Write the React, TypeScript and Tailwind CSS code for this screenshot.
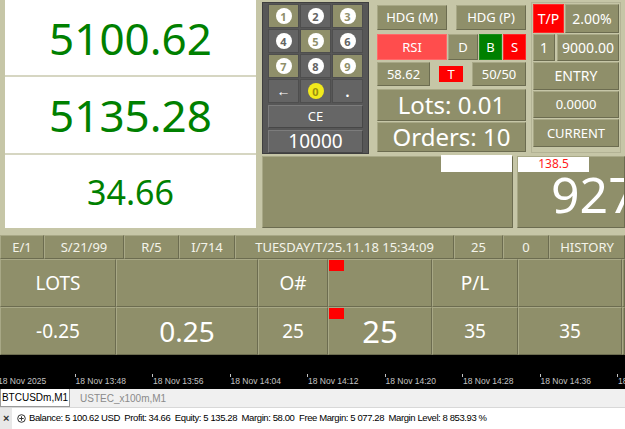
import clsx from 'clsx';
import type { ReactNode } from 'react';

const olive = 'bg-[#8f8f6a] border border-t-[#a8a886] border-l-[#a8a886] border-b-[#6c6c50] border-r-[#6c6c50]';

function Btn({ className, children }: { className?: string; children?: ReactNode }) {
    return (
        <div className={clsx('flex items-center justify-center text-white leading-none whitespace-nowrap', olive, className)}>
            {children}
        </div>
    );
}

function Key({ n, tone }: { n: string; tone: 'olive' | 'gray' }) {
    const bg = tone === 'olive' ? 'bg-[#8f8f6a]' : 'bg-[#646464]';
    const fg = tone === 'olive' ? 'text-[#8f8f6a]' : 'text-[#646464]';
    return (
        <div className={clsx('flex items-center justify-center h-[24px] border border-[#4e4e4e]', bg)}>
            <span className={clsx('w-[16px] h-[16px] rounded-full bg-white flex items-center justify-center text-[11px] font-bold leading-none', fg)}>
                {n}
            </span>
        </div>
    );
}

export default function App() {
    const keys: [string, 'olive' | 'gray'][] = [
        ['1', 'olive'], ['2', 'gray'], ['3', 'olive'],
        ['4', 'gray'], ['5', 'olive'], ['6', 'gray'],
        ['7', 'olive'], ['8', 'gray'], ['9', 'olive'],
    ];

    const info = [
        { t: 'E/1', w: 'w-[44px]' },
        { t: 'S/21/99', w: 'w-[80px]' },
        { t: 'R/5', w: 'w-[55px]' },
        { t: 'I/714', w: 'w-[56px]' },
        { t: 'TUESDAY/T/25.11.18 15:34:09', w: 'w-[219px]' },
        { t: '25', w: 'w-[49px]' },
        { t: '0', w: 'w-[46px]' },
        { t: 'HISTORY', w: 'flex-1' },
    ];

    const widths = ['w-[116px]', 'w-[142px]', 'w-[70px]', 'w-[104px]', 'w-[86px]', 'w-[104px]', 'flex-1'];
    const row1: (string | null)[] = ['LOTS', null, 'O#', null, 'P/L', null, null];
    const row2: { t: string; big?: boolean }[] = [
        { t: '-0.25' }, { t: '0.25', big: true }, { t: '25' }, { t: '25', big: true }, { t: '35' }, { t: '35' }, { t: '' },
    ];

    const ticks = ['18 Nov 2025', '18 Nov 13:48', '18 Nov 13:56', '18 Nov 14:04', '18 Nov 14:12', '18 Nov 14:20', '18 Nov 14:28', '18 Nov 14:36', '18 Nov 14:44'];

    return (
        <div className="w-[625px] h-[429px] overflow-hidden bg-[#c6c6a7] font-['Noto_Sans',sans-serif]">
            {/* top */}
            <div className="flex h-[235px]">
                <div className="ml-[5px] w-[251px] shrink-0 h-[228px] bg-white flex flex-col text-[#008000] leading-none">
                    <div className="h-[77px] flex items-center justify-center text-[44px] border-b-2 border-[#d6d6c2]">5100.62</div>
                    <div className="h-[78px] flex items-center justify-center text-[44px] border-b-2 border-[#d6d6c2]">5135.28</div>
                    <div className="flex-1 flex items-center justify-center text-[34px]">34.66</div>
                </div>

                <div className="ml-[6px] flex-1 min-w-0 flex flex-col">
                    <div className="h-[155px] flex">
                        {/* keypad */}
                        <div className="mt-[2px] w-[107px] shrink-0 h-[152px] bg-[#575757] border border-[#3f3f3f] px-[5px] pt-[1px] flex flex-col gap-[1px]">
                            <div className="grid grid-cols-3 gap-[1px]">
                                {keys.map(([n, tone]) => (
                                    <Key key={n} n={n} tone={tone} />
                                ))}
                                <div className="flex items-center justify-center h-[24px] bg-[#646464] border border-[#4e4e4e] text-white text-[14px] leading-none">←</div>
                                <div className="flex items-center justify-center h-[24px] bg-[#646464] border border-[#4e4e4e]">
                                    <span className="w-[16px] h-[16px] rounded-full bg-[#f2ea1c] flex items-center justify-center text-[11px] font-bold text-[#9a8f10] leading-none">0</span>
                                </div>
                                <div className="flex items-end justify-center pb-[3px] h-[24px] bg-[#646464] border border-[#4e4e4e] text-white text-[14px] font-bold leading-none">.</div>
                            </div>
                            <div className="mt-[1px] h-[24px] bg-[#666666] border border-t-[#7c7c7c] border-l-[#7c7c7c] border-b-[#474747] border-r-[#474747] flex items-center justify-center text-white text-[13px] leading-none">CE</div>
                            <div className="mt-[1px] h-[24px] bg-[#666666] border border-t-[#7c7c7c] border-l-[#7c7c7c] border-b-[#474747] border-r-[#474747] flex items-center justify-center text-white text-[19px] leading-none">10000</div>
                        </div>

                        {/* left buttons */}
                        <div className="ml-[8px] w-[149px] shrink-0 flex flex-col text-[13px]">
                            <div className="mt-[5px] flex gap-[9px] h-[25px]">
                                <Btn className="w-[70px]">HDG (M)</Btn>
                                <Btn className="w-[70px]">HDG (P)</Btn>
                            </div>
                            <div className="mt-[4px] flex gap-[1px] h-[26px]">
                                <Btn className="w-[70px] !bg-[#ff4d4d] !border-[#ff6a6a]">RSI</Btn>
                                <Btn className="w-[30px]">D</Btn>
                                <Btn className="w-[23px] !bg-[#008000] !border-[#1a8f1a]">B</Btn>
                                <Btn className="w-[23px] !bg-[#ff0000] !border-[#ff2a2a]">S</Btn>
                            </div>
                            <div className="mt-[2px] flex items-center h-[24px]">
                                <Btn className="w-[53px] h-[24px]">58.62</Btn>
                                <div className="ml-[9px] w-[24px] h-[16px] bg-[#ff0000] text-white flex items-center justify-center leading-none">T</div>
                                <Btn className="ml-[9px] w-[54px] h-[24px]">50/50</Btn>
                            </div>
                            <Btn className="mt-[3px] h-[32px] text-[24px]">Lots: 0.01</Btn>
                            <Btn className="mt-[1px] h-[30px] text-[24px]">Orders: 10</Btn>
                        </div>

                        {/* right column */}
                        <div className="ml-[5px] mt-[2px] w-[90px] shrink-0 h-[151px] border border-[#b3b395] px-[1px] pt-[1px] flex flex-col gap-[1px] text-[13px]">
                            <div className="flex gap-[1px] h-[29px]">
                                <div className="w-[31px] bg-[#ff0000] border border-[#ff2a2a] text-white flex items-center justify-center leading-none text-[14px]">T/P</div>
                                <Btn className="flex-1 text-[14px]">2.00%</Btn>
                            </div>
                            <div className="flex gap-[2px] h-[27px]">
                                <Btn className="w-[22px] text-[14px]">1</Btn>
                                <Btn className="flex-1 text-[14px]">9000.00</Btn>
                            </div>
                            <Btn className="h-[28px] text-[14px]">ENTRY</Btn>
                            <Btn className="h-[27px]">0.0000</Btn>
                            <Btn className="h-[28px]">CURRENT</Btn>
                        </div>
                    </div>

                    <div className="mt-[1px] flex gap-[4px] h-[72px]">
                        <div className={clsx('w-[251px] shrink-0 flex justify-end items-start', olive)}>
                            <div className="-mt-[2px] w-[71px] h-[17px] bg-white" />
                        </div>
                        <div className={clsx('flex-1 min-w-0 flex flex-col items-start overflow-hidden', olive)}>
                            <div className="-mt-[2px] w-[71px] h-[17px] bg-white text-[#ff1a1a] text-[12px] leading-none flex items-center justify-center">138.5</div>
                            <div className="ml-[33px] text-white text-[50px] leading-[44px] whitespace-nowrap">927</div>
                        </div>
                    </div>
                </div>
            </div>

            {/* info bar */}
            <div className="flex h-[24px] text-[13px] text-[#f4f4ea]">
                {info.map((c) => (
                    <div key={c.t} className={clsx(c.w, olive, 'flex items-center justify-center leading-none whitespace-nowrap')}>
                        {c.t}
                    </div>
                ))}
            </div>

            {/* table */}
            <div className="flex h-[48px] text-white text-[19px]">
                {row1.map((t, i) => (
                    <div key={i} className={clsx(widths[i], olive, 'relative flex items-center justify-center leading-none')}>
                        {i === 3 && <span className="absolute left-0 top-0 w-[15px] h-[11px] bg-[#ff0000]" />}
                        {t}
                    </div>
                ))}
            </div>
            <div className="flex h-[48px] text-white text-[19px]">
                {row2.map((c, i) => (
                    <div key={i} className={clsx(widths[i], olive, 'relative flex items-center justify-center leading-none', c.big && (i === 3 ? 'text-[31px]' : 'text-[28px]'))}>
                        {i === 3 && <span className="absolute left-0 top-0 w-[15px] h-[11px] bg-[#ff0000]" />}
                        {c.t}
                    </div>
                ))}
            </div>

            {/* chart time axis */}
            <div className="h-[34px] bg-black flex items-end pb-[4px] font-['Liberation_Sans',sans-serif] text-[8.5px] text-[#c4c4c4]">
                <div className="flex -ml-[3px]">
                    {ticks.map((t) => (
                        <div key={t} className="w-[77.5px] shrink-0 relative leading-none pl-[1px] whitespace-nowrap">
                            <span className="absolute left-0 -top-[3px] w-px h-[3px] bg-[#c4c4c4]" />
                            {t}
                        </div>
                    ))}
                </div>
            </div>

            {/* tabs */}
            <div className="h-[18px] bg-[#f0f0f0] flex items-stretch font-['Liberation_Sans',sans-serif] text-[10px]">
                <div className="w-[70px] bg-white border border-t-0 border-[#9a9a9a] flex items-center justify-center text-black">BTCUSDm,M1</div>
                <div className="ml-[10px] flex items-center text-[#8a8a8a]">USTEC_x100m,M1</div>
            </div>

            {/* status */}
            <div className="h-[22px] bg-white border-t border-[#d8d8d8] flex items-center font-['Liberation_Sans',sans-serif] text-[9.5px] text-black tracking-[-0.4px] whitespace-nowrap">
                <div className="w-[12px] h-full bg-[#e8e8e8] flex items-center justify-center text-[11px] font-bold text-[#333]">×</div>
                <svg className="ml-[5px] mr-[3px]" width="9" height="9" viewBox="0 0 9 9">
                    <circle cx="4.5" cy="4.5" r="3.8" fill="none" stroke="#333" strokeWidth="1" />
                    <path d="M4.5 2.3v4.4M2.3 4.5h4.4" stroke="#333" strokeWidth="1" />
                </svg>
                <span>Balance: 5 100.62 USD&nbsp; Profit: 34.66&nbsp; Equity: 5 135.28&nbsp; Margin: 58.00&nbsp; Free Margin: 5 077.28&nbsp; Margin Level: 8 853.93 %</span>
            </div>
        </div>
    );
}
